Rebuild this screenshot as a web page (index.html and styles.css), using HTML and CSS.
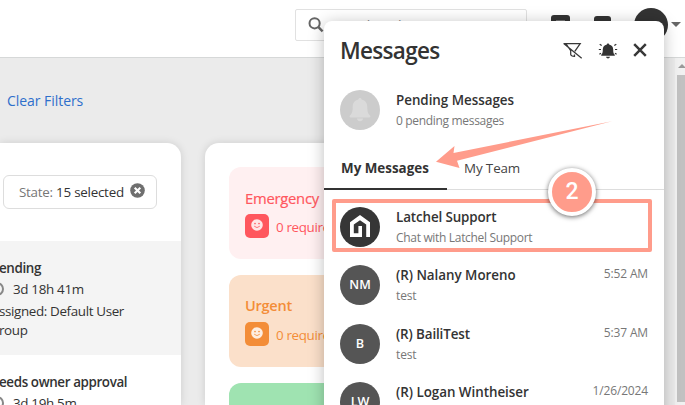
FILE: index.html
```html
<!DOCTYPE html>
<html lang="en">
<head>
<meta charset="utf-8">
<title>Messages</title>
<link rel="stylesheet" href="styles.css">
</head>
<body>
<header class="topbar">
  <div class="search">
    <svg width="16" height="16" viewBox="0 0 16 16" fill="none" stroke="#666"><circle cx="6.6" cy="6.3" r="5.1" stroke-width="2"/><path d="M10.4 10.2 14.6 14.4" stroke-width="2.4"/></svg>
    <span>Search orders</span>
  </div>
  <div class="nav-tile tile-a"><i></i></div>
  <div class="nav-tile tile-b"></div>
  <div class="user"></div>
  <div class="caret"></div>
</header>
<div class="body">
  <main class="main">
    <div class="filters"><a>Clear Filters</a></div>
    <div class="columns">
      <section class="card states">
        <div class="state-filter">
          <div class="pill"><span>State: <b>15 selected</b></span>
            <svg width="15" height="15" viewBox="0 0 15 15"><circle cx="7.5" cy="7.5" r="7.3" fill="#6f6f6f"/><path d="M4.7 4.7l5.6 5.6M10.3 4.7l-5.6 5.6" stroke="#fff" stroke-width="2.1"/></svg>
          </div>
        </div>
        <div class="state active">
          <h3>ending</h3>
          <div class="age"><i></i><span>3d 18h 41m</span></div>
          <p>ssigned: Default User<br>roup</p>
        </div>
        <div class="state">
          <h3>eeds owner approval</h3>
          <div class="age"><i></i><span>3d 19h 5m</span></div>
        </div>
      </section>
      <section class="card priorities">
        <div class="priority emergency">
          <h4>Emergency</h4>
          <div class="req"><span class="face"><svg width="12" height="12" viewBox="0 0 12 12"><circle cx="6" cy="6" r="5.8" fill="#fff" fill-opacity=".85"/><g fill="currentColor"><circle cx="4" cy="4.6" r=".8"/><circle cx="8" cy="4.6" r=".8"/></g><path d="M3.2 7.2Q6 10 8.8 7.2" fill="none" stroke="currentColor" stroke-width=".8"/></svg></span><span>0 require</span></div>
        </div>
        <div class="priority urgent">
          <h4>Urgent</h4>
          <div class="req"><span class="face"><svg width="12" height="12" viewBox="0 0 12 12"><circle cx="6" cy="6" r="5.8" fill="#fff" fill-opacity=".85"/><g fill="currentColor"><circle cx="4" cy="4.6" r=".8"/><circle cx="8" cy="4.6" r=".8"/></g><path d="M3.2 7.2Q6 10 8.8 7.2" fill="none" stroke="currentColor" stroke-width=".8"/></svg></span><span>0 require</span></div>
        </div>
        <div class="priority normal"></div>
      </section>
    </div>
  </main>
  <div class="scrollbar"><i class="up"></i><i class="thumb"></i></div>
</div>

<aside class="panel">
  <div class="panel-head">
    <h1>Messages</h1>
    <svg width="20" height="16" viewBox="0 0 20 16" fill="none" stroke="#383838" stroke-width="1.25"><path d="M.5.7H17.2L11.8 8.4M3.2 1.2 7.7 7.7V11.5Q8 13.3 11.5 13.3V11.5M1 .8 18.7 15.2"/></svg>
    <svg width="20" height="16" viewBox="0 0 20 16"><path d="M10 .5c.8 0 1.1.5 1.1 1.1 2.8.5 4.1 2.5 4.1 4.900 0 3.6.6 4.3 1.6 5.3v.9H3.200v-.9c1-1 1.6-1.7 1.6-5.3 0-2.4 1.3-4.4 4.1-4.900C8.9 1 9.2.5 10 .5ZM8 13.700h4Q11.700 15.400 10 15.400T8 13.700Z" fill="#333"/><path d="M.8 6.500h2.200M1.700 1.300l2 1.300M1.400 11.300l1.600-1M19.200 6.500h-2.200M18.300 1.300l-2 1.300M18.600 11.300l-1.600-1" stroke="#333" stroke-width="1.2"/></svg>
    <svg width="14" height="14" viewBox="0 0 14 14"><path d="M1.200 1.200 12.800 12.800M12.800 1.200 1.200 12.800" stroke="#383838" stroke-width="2.500"/></svg>
  </div>
  <div class="row pending-row">
    <div class="avatar light"><svg width="22" height="24" viewBox="0 0 22 24"><path d="M11 0c1 0 1.600.700 1.600 1.600 4 .8 5.700 3.800 5.700 7.400 0 4.800.8 6.500 2.700 8.500.8.9.300 2-.8 2H1.800c-1.100 0-1.600-1.100-.8-2 1.900-2 2.700-3.700 2.700-8.500 0-3.600 1.700-6.600 5.700-7.400C9.400.700 10 0 11 0ZM8 20.500h6q-.4 2.800-3 2.800t-3-2.800Z" fill="#dadada"/></svg></div>
    <div class="info"><b>Pending Messages</b><span class="count">0 pending messages</span></div>
  </div>
  <nav class="tabs"><span class="tab selected">My Messages</span><span class="tab">My Team</span></nav>
  <div class="row support">
    <div class="avatar dark"><svg width="20" height="22" viewBox="0 0 20 22"><path d="M0 22V7.300L10 0 20 7.300V22H16.200V9.600L10 5.300 3.800 9.600V18.200H8.400V11H12V22Z" fill="#fff"/></svg></div>
    <div class="info"><b class="wide">Latchel Support</b><span class="hint">Chat with Latchel Support</span></div>
  </div>
  <div class="row r1"><div class="avatar">NM</div><div class="info"><b>(R) Nalany Moreno</b><span>test</span></div><time>5:52 AM</time></div>
  <div class="row r2"><div class="avatar">B</div><div class="info"><b class="wide">(R) BailiTest</b><span>test</span></div><time>5:37 AM</time></div>
  <div class="row r3"><div class="avatar">LW</div><div class="info"><b>(R) Logan Wintheiser</b></div><time>1/26/2024</time></div>
</aside>

<div class="highlight"></div>
<svg class="arrow" width="685" height="405" viewBox="0 0 685 405"><path d="M612 121.300 457 160.800 459.500 168 436 161.800 454.500 146 453.500 153Z" fill="#ff9c8b"/></svg>
<div class="step">2</div>
</body>
</html>
```
FILE: styles.css
```css
* { box-sizing: border-box; }
body {
  margin: 0; width: 685px; height: 405px; overflow: hidden; position: relative;
  background: #ebebeb; color: #333;
  font: 13.4px/20px "Open Sans", "Noto Sans", sans-serif;
}
h1, h3, h4, p { margin: 0; }
svg { display: block; flex: none; }
.topbar { height: 58px; background: #fff; border-bottom: 1px solid #d6d8d8; display: flex; padding: 8px 3px 0 295px; }
.search { width: 232px; height: 32px; border: 1px solid #e1e1e1; border-radius: 2px; display: flex; gap: 7px; padding: 6px 0 0 12px; color: #888; margin-top: 1px; flex: none; }
.search svg { margin-top: 1px; }
.search span { font-size: 14px; }
.nav-tile { height: 18px; background: #333; border-radius: 3px; margin-top: 7px; flex: none; }
.tile-a { width: 19px; margin-left: 24px; padding: 5px; }
.tile-a i { display: block; height: 1px; background: #777; }
.tile-b { width: 17px; margin-left: 24px; margin-top: 8px; }
.user { width: 34px; height: 34px; border-radius: 50%; background: #333; margin-left: 23px; flex: none; }
.caret { margin: 14px 0 0 3px; border: 5px solid transparent; border-top-color: #666; height: 5px; }
.body { display: flex; height: 347px; }
.main { flex: 1; min-width: 0; }
.filters { height: 85px; padding: 33px 0 0 7px; }
.filters a { color: #2e6fcb; font-size: 14px; letter-spacing: -.05px; }
.columns { display: flex; gap: 24px; height: 262px; }
.card { background: #fff; box-shadow: 0 0 8px rgba(0,0,0,.13); flex: none; overflow: hidden; }
.states { width: 181px; border-radius: 0 14px 0 0; }
.state-filter { height: 98px; padding: 32px 0 0 3px; }
.pill { width: 154px; height: 34px; border: 1px solid #ddd; border-radius: 6px; padding: 6px 0 0 15px; display: flex; gap: 6px; color: #777; letter-spacing: -.25px; white-space: nowrap; }
.pill b { font-weight: 400; color: #333; }
.pill svg { margin-top: 1px; }
.state { padding: 16px 0 0; height: 114px; }
.active { background: #f4f4f4; }
.state h3 { font-size: 13.4px; font-weight: 600; line-height: 20px; letter-spacing: -.38px; margin-left: -1px; padding-top: 1px; }
.age { display: flex; gap: 9px; margin-top: 1px; height: 22px; line-height: 20px; letter-spacing: -.32px; }
.age i { width: 14px; height: 14px; border: 2px solid #888; border-radius: 50%; margin: 3px 0 0 -10px; }
.state p { line-height: 19px; letter-spacing: -.36px; margin: 1px 0 0 -1px; }
.priorities { width: 446px; padding: 24px; border-radius: 14px 14px 0 0; }
.priority { height: 92px; border-radius: 12px; padding: 21px 16px 0; margin-bottom: 16px; }
.priority h4 { font-size: 14.5px; line-height: 20px; font-weight: 600; letter-spacing: -.25px; }
.req { display: flex; gap: 7px; line-height: 26px; margin-top: 6px; letter-spacing: -.35px; white-space: nowrap; }
.face { width: 24px; height: 24px; border-radius: 5px; display: flex; justify-content: center; padding-top: 5px; }
.emergency { background: #fff0f1; color: #ff575e; }
.emergency .face { background: #ff575e; }
.urgent { background: #fbe0ca; color: #f38d38; }
.priority.emergency h4 { font-weight: 500; font-size: 14.8px; -webkit-text-stroke: .2px #ff575e; }
.urgent .face { background: #f38d38; }
.normal { background: #9fe3b1; }
.scrollbar { width: 10px; background: #f1f1f1; padding: 6px 0 3px 2px; }
.scrollbar i { display: block; }
.up { width: 0; border: 4px solid transparent; border-top: 0; border-bottom-color: #999; margin: 0 0 7px 1px; }
.thumb { height: 327px; background: #c1c1c1; }
.panel { position: absolute; left: 324px; top: 21px; width: 340px; height: 400px; background: #fff; border-radius: 8px 8px 0 0; box-shadow: 0 2px 16px rgba(0,0,0,.26); overflow: hidden; }
.panel-head { display: flex; height: 69px; padding: 14px 17px 0 16px; }
h1 { font-size: 22.5px; line-height: 32px; font-weight: 600; letter-spacing: -.7px; margin-right: auto; }
.panel-head svg { margin-top: 8px; }
.panel-head svg + svg { margin-left: 15px; }
.row { display: flex; padding: 0 16px; }
.avatar { width: 40px; height: 40px; flex: none; border-radius: 50%; background: #555; color: #fff; display: flex; align-items: center; justify-content: center; font-size: 12.6px; font-weight: 600; }
.light { background: #ccc; }
.dark { background: #363636; padding-bottom: 2px; }
.info { flex: 1; margin-left: 16px; display: flex; flex-direction: column; white-space: nowrap; }
.info b { font-weight: 600; font-size: 13.4px; line-height: 20px; letter-spacing: -.03px; }
.info .wide { letter-spacing: -.12px; }
.info span { font-size: 12px; line-height: 21px; color: #777; letter-spacing: -.15px; }
.info .count, .info .hint { letter-spacing: -.32px; }
.pending-row { height: 59px; }
.tabs { display: flex; height: 41px; border-bottom: 1px solid #ddd; color: #444; line-height: 38px; letter-spacing: -.12px; }
.tab { padding: 0 17px; height: 41px; }
.selected { width: 123px; font-weight: 700; color: #333; border-bottom: 2px solid #333; white-space: nowrap; letter-spacing: 0; }
.support { height: 75px; padding-top: 17px; }
.r1 { height: 59px; }
.r2 { height: 58px; }
time { font-size: 12px; line-height: 18px; color: #777; letter-spacing: -.15px; }
.highlight { position: absolute; left: 332px; top: 199px; width: 320px; height: 53px; border: 4px solid #ff9c8b; border-radius: 2px; }
.arrow { position: absolute; left: 0; top: 0; }
.step { position: absolute; left: 548px; top: 168px; width: 48px; height: 48px; border: 4px solid #fff; border-radius: 50%; background: #ff9c8b; box-shadow: 0 1px 5px rgba(0,0,0,.6); color: #fff; font: 500 23px/39px Roboto, sans-serif; text-align: center; }
```
